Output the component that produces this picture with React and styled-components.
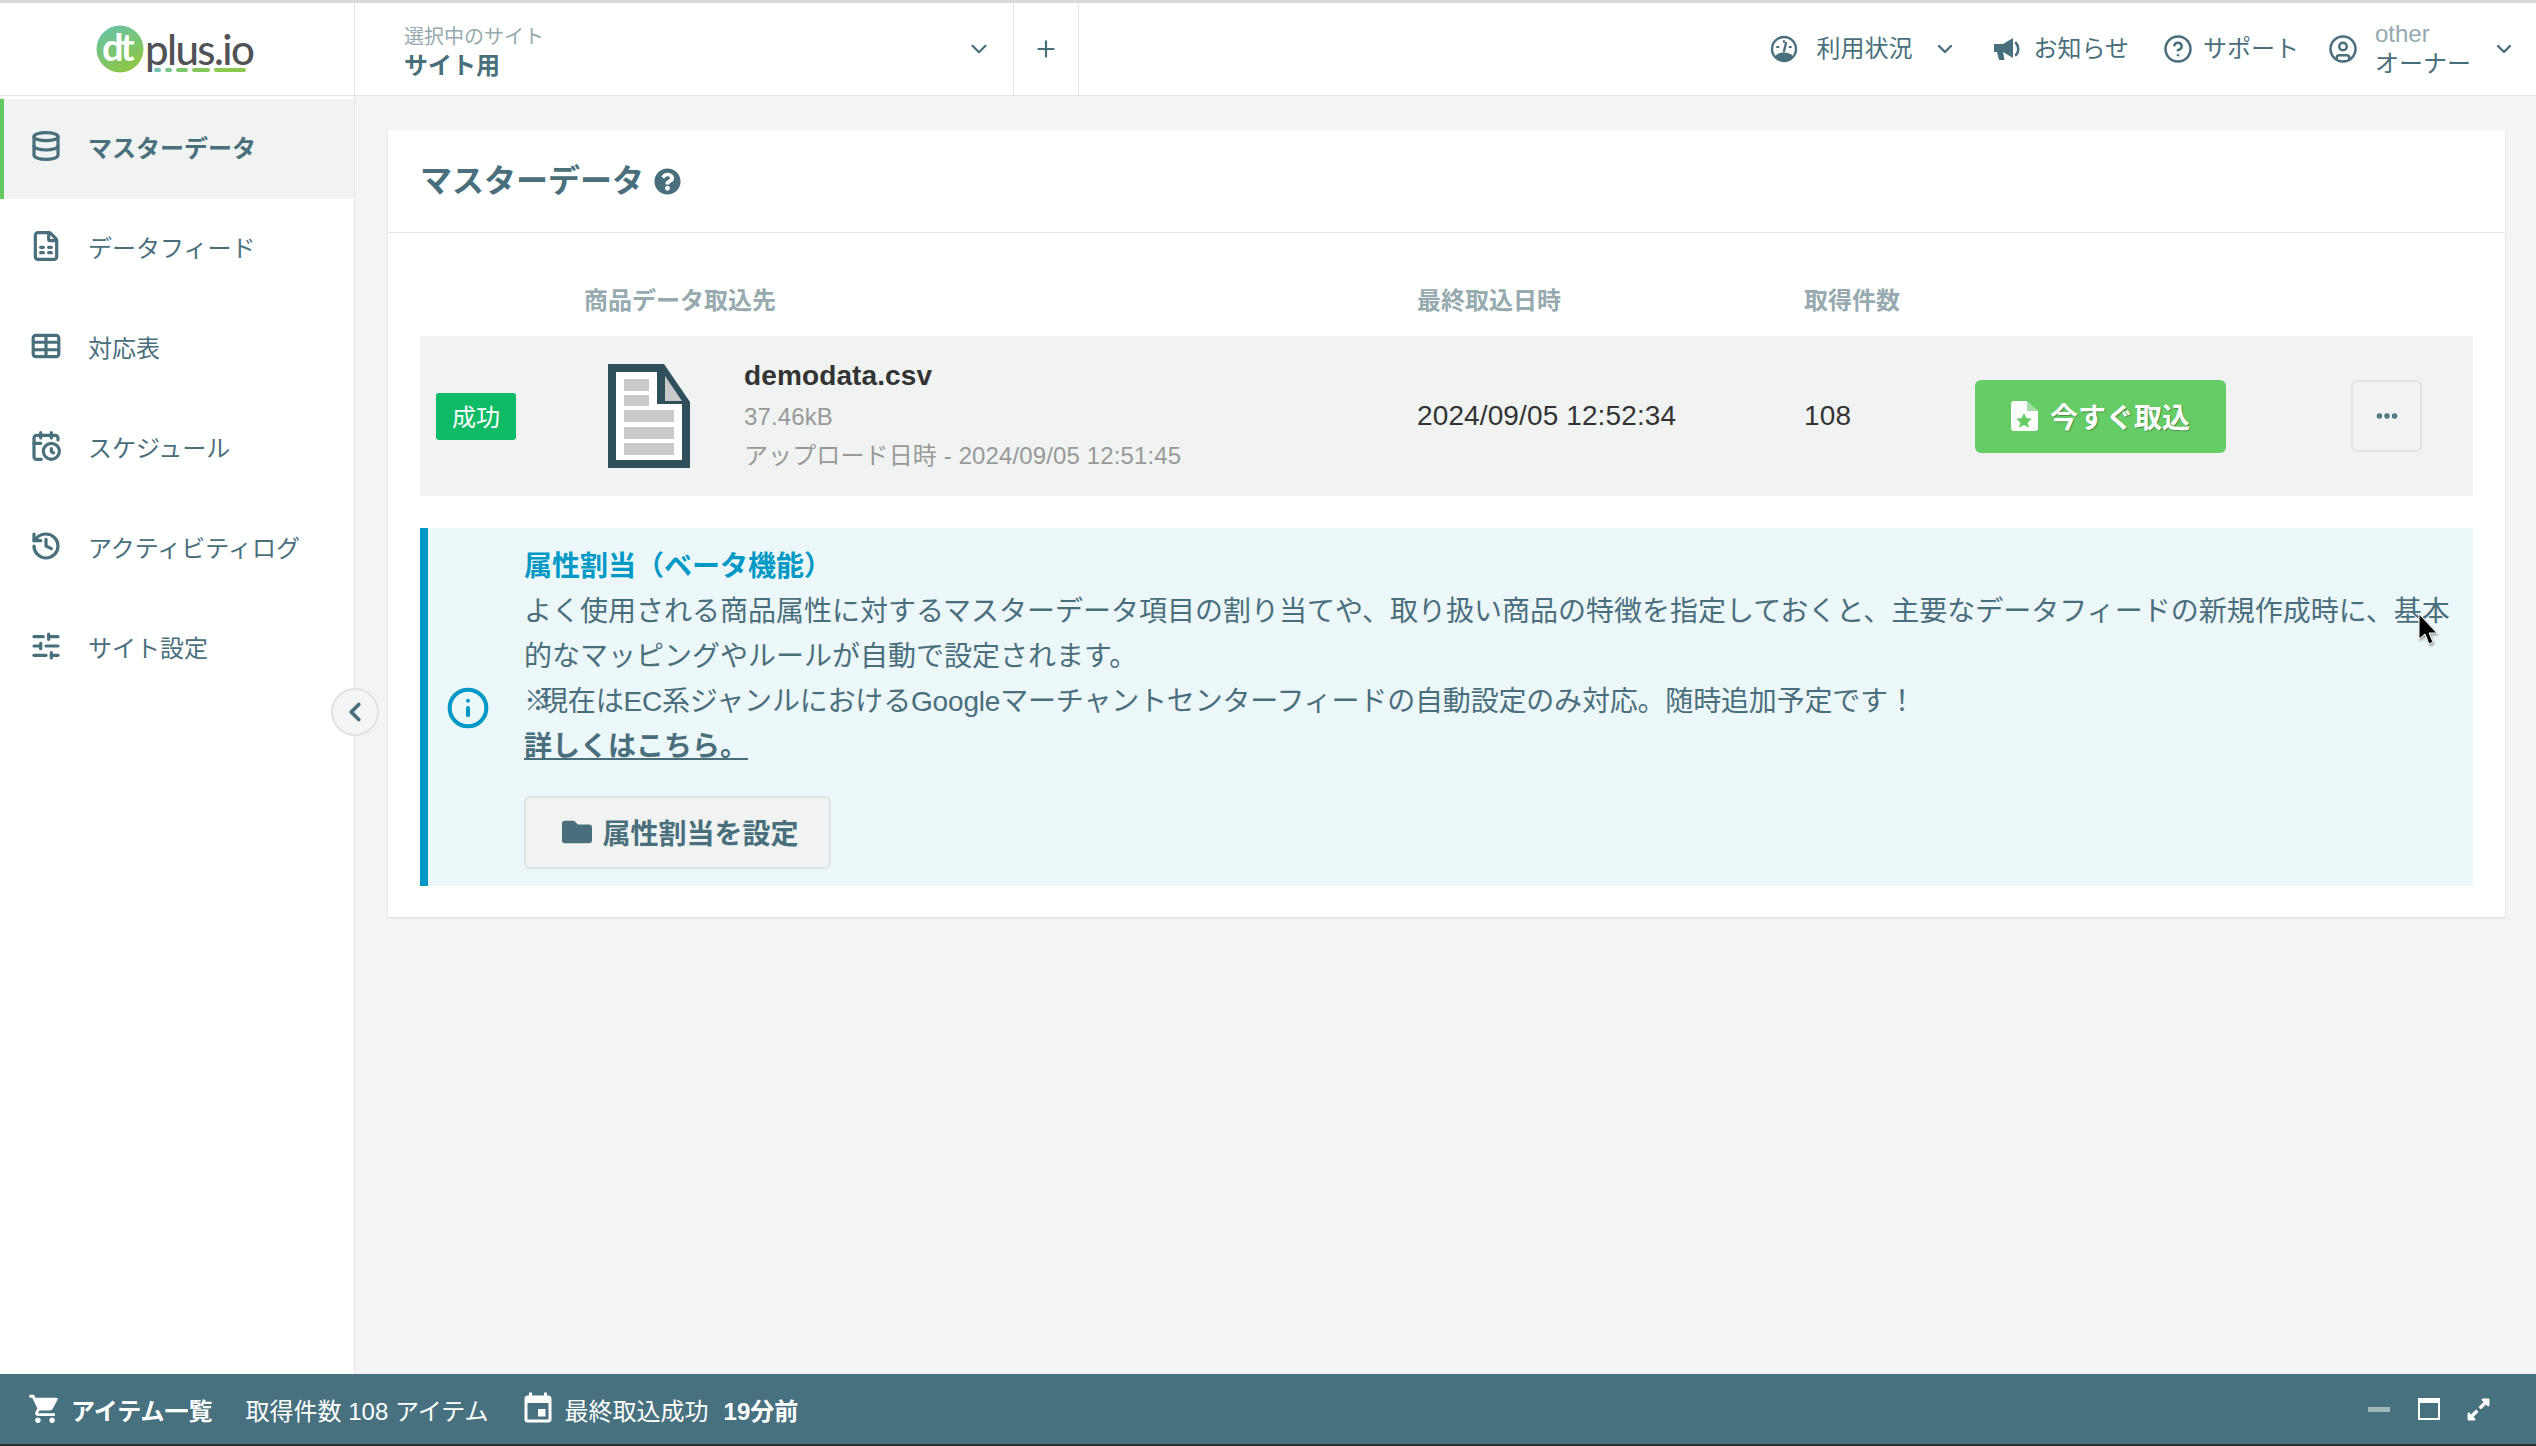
import React from "react";
import styled, { createGlobalStyle } from "styled-components";
import {
  Database,
  FileSpreadsheet,
  CalendarClock,
  History,
  SlidersHorizontal,
  ChevronDown,
  ChevronLeft,
  Plus,
  CircleHelp,
  CircleUser,
  Info,
  Ellipsis,
} from "lucide-react";
import { FaFolder, FaQuestionCircle, FaExpandAlt } from "react-icons/fa";
import { MdShoppingCart, MdEvent } from "react-icons/md";

const teal = "#4a6f7c";
const font = `"Liberation Sans", "Noto Sans CJK JP", sans-serif`;

const GlobalStyle = createGlobalStyle`
  html, body {
    margin: 0;
    padding: 0;
    height: 100%;
    overflow: hidden;
    background: #f3f4f5;
  }
  * {
    box-sizing: border-box;
  }
  body {
    font-family: ${font};
    color: ${teal};
  }
`;

const Page = styled.div`
  position: relative;
  width: 100%;
  height: 100vh;
  display: flex;
  flex-direction: column;
`;

const Header = styled.header`
  flex: 0 0 96px;
  display: flex;
  align-items: stretch;
  background: #fff;
  border-top: 3px solid #d9dadc;
  border-bottom: 1px solid #e3e6e6;
`;

const LogoCell = styled.div`
  width: 355px;
  display: flex;
  align-items: center;
  padding-left: 96px;
  border-right: 1px solid #e3e6e6;
`;

const LogoSvg = styled.svg`
  flex: none;
  overflow: visible;
`;

const LogoWordWrap = styled.div`
  display: flex;
  flex-direction: column;
  margin-left: 1px;
  padding-top: 3px;
`;

const LogoWord = styled.span`
  font-family: Lato, sans-serif;
  font-size: 42px;
  line-height: 38px;
  font-weight: 500;
  letter-spacing: -1.6px;
  color: #505256;
`;

const LogoDots = styled.div`
  display: flex;
  gap: 4px;
  margin-left: 9px;
  margin-top: 0;
`;

const LogoDot = styled.i`
  display: block;
  width: ${(p) => p.$w}px;
  height: 4px;
  border-radius: 2px;
  background: ${(p) => p.$c};
`;

const SiteSelect = styled.div`
  width: 659px;
  display: flex;
  align-items: center;
  justify-content: space-between;
  padding: 0 21px 0 49px;
  border-right: 1px solid #e3e6e6;
`;

const SiteLabels = styled.div`
  display: flex;
  flex-direction: column;
  padding-top: 6px;
`;

const SiteCaption = styled.span`
  font-size: 20px;
  line-height: 28px;
  color: #96aaaf;
`;

const SiteName = styled.span`
  font-size: 24px;
  line-height: 30px;
  font-weight: 700;
  color: ${teal};
`;

const AddCell = styled.div`
  width: 65px;
  display: flex;
  align-items: center;
  justify-content: center;
  color: ${teal};
  border-right: 1px solid #e3e6e6;
`;

const HeaderTools = styled.div`
  flex: 1;
  display: flex;
  align-items: center;
  justify-content: flex-end;
  padding-right: 20px;
`;

const Tool = styled.div`
  display: flex;
  align-items: center;
  gap: ${(p) => p.$gap || 12}px;
  margin-left: ${(p) => p.$ml || 0}px;
  font-size: 24px;
  line-height: 30px;
  color: ${teal};
`;

const ToolChevron = styled.span`
  display: flex;
  margin-left: ${(p) => p.$ml}px;
  color: ${teal};
`;

const UserLabels = styled.div`
  display: flex;
  flex-direction: column;
`;

const UserName = styled.span`
  font-size: 24px;
  line-height: 30px;
  color: #96aaaf;
`;

const Middle = styled.div`
  flex: 1;
  min-height: 0;
  display: flex;
`;

const Sidebar = styled.nav`
  position: relative;
  width: 355px;
  display: flex;
  flex-direction: column;
  padding-top: 3px;
  background: #fff;
  border-right: 1px solid #e3e6e6;
`;

const NavItem = styled.div`
  height: 100px;
  display: flex;
  align-items: center;
  gap: 26px;
  padding: 0 0 6px 26px;
  border-left: 4px solid ${(p) => (p.$active ? "#62c962" : "transparent")};
  background: ${(p) => (p.$active ? "#f1f3f3" : "transparent")};
  font-size: 24px;
  font-weight: ${(p) => (p.$active ? 700 : 400)};
  color: ${teal};
  svg {
    flex: none;
  }
`;

const CollapseButton = styled.button`
  position: absolute;
  top: 592px;
  right: -25px;
  width: 48px;
  height: 48px;
  display: flex;
  align-items: center;
  justify-content: center;
  padding: 0;
  border-radius: 50%;
  border: 2px solid #dfe3e3;
  background: #f4f5f5;
  color: ${teal};
`;

const Main = styled.main`
  flex: 1;
  padding: 34px 31px 0 33px;
`;

const Card = styled.section`
  background: #fff;
  height: 787px;
  box-shadow: 0 1px 2px rgba(0, 0, 0, 0.12);
`;

const CardHeader = styled.div`
  height: 103px;
  display: flex;
  align-items: center;
  gap: 10px;
  padding-left: 32px;
  border-bottom: 1px solid #e3e6e6;
`;

const CardTitle = styled.h1`
  margin: 0;
  font-size: 32px;
  line-height: 40px;
  font-weight: 700;
  color: ${teal};
`;

const CardBody = styled.div`
  padding: 0 32px;
`;

const columns = "164px 833px 387px 171px 376px 1fr";

const TableHead = styled.div`
  height: 103px;
  display: grid;
  grid-template-columns: ${columns};
  align-items: center;
  padding-top: 33px;
  font-size: 24px;
  line-height: 30px;
  font-weight: 700;
  color: #96aaaf;
`;

const TableRow = styled.div`
  height: 160px;
  display: grid;
  grid-template-columns: ${columns};
  align-items: center;
  background: #f1f3f3;
  font-size: 28px;
  letter-spacing: 0.12px;
  color: #333;
`;

const StatusCell = styled.div`
  padding-left: 16px;
`;

const Badge = styled.span`
  display: flex;
  align-items: center;
  justify-content: center;
  width: 80px;
  height: 47px;
  padding-bottom: 1px;
  border-radius: 3px;
  background: #0fbb66;
  color: #fff;
  font-size: 24px;
`;

const SourceCell = styled.div`
  display: flex;
  align-items: center;
  gap: 54px;
  padding-left: 24px;
`;

const FileInfo = styled.div`
  display: flex;
  flex-direction: column;
  padding-bottom: 1px;
`;

const FileName = styled.div`
  font-size: 28px;
  line-height: 38px;
  margin-bottom: 2px;
  font-weight: 700;
  color: #333;
`;

const FileMeta = styled.div`
  font-size: 24px;
  line-height: 39px;
  color: #999;
`;

const ImportButton = styled.button`
  width: 251px;
  height: 73px;
  display: flex;
  align-items: center;
  justify-content: center;
  gap: 12px;
  border: none;
  border-radius: 6px;
  background: #66cc66;
  color: #fff;
  font-family: ${font};
  font-size: 28px;
  font-weight: 700;
  text-shadow: 1px 1px 1px rgba(0, 0, 0, 0.3);
`;

const MoreButton = styled.button`
  width: 71px;
  height: 72px;
  display: flex;
  align-items: center;
  justify-content: center;
  padding: 0;
  border: 2px solid #dfe3e3;
  border-radius: 6px;
  background: transparent;
  color: ${teal};
`;

const Alert = styled.div`
  height: 358px;
  margin-top: 32px;
  display: flex;
  background: #ecf7f9;
  border-left: 8px solid #0099c6;
`;

const AlertIcon = styled.div`
  width: 96px;
  display: flex;
  align-items: center;
  padding-left: 18px;
  padding-top: 2px;
  color: #0099c6;
`;

const AlertBody = styled.div`
  flex: 1;
  padding: 16px 12px 0 0;
  font-size: 28px;
  line-height: 45px;
  color: ${teal};
`;

const AlertTitle = styled.div`
  font-weight: 700;
  color: #0099c6;
`;

const AlertNote = styled.div`
  letter-spacing: -0.18px;
`;

const NoteMark = styled.span`
  letter-spacing: -12px;
`;

const AlertLink = styled.a`
  display: block;
  font-weight: 700;
  color: ${teal};
  text-decoration: underline;
`;

const OutlineButton = styled.button`
  width: 307px;
  height: 73px;
  margin-top: 27px;
  display: flex;
  align-items: center;
  justify-content: center;
  gap: 10px;
  padding: 0 0 2px 6px;
  border: 2px solid #dfe3e3;
  border-radius: 6px;
  background: #f1f3f3;
  color: ${teal};
  font-family: ${font};
  font-size: 28px;
  font-weight: 700;
`;

const Footer = styled.footer`
  flex: 0 0 72px;
  display: flex;
  align-items: center;
  padding: 0 45px 0 28px;
  background: #47717f;
  border-bottom: 2px solid #2a2f31;
  color: #fff;
  font-size: 24px;
`;

const FooterGroup = styled.div`
  display: flex;
  align-items: center;
  gap: ${(p) => p.$gap || 0}px;
  margin-left: ${(p) => p.$ml || 0}px;
  font-weight: ${(p) => (p.$bold ? 700 : 400)};
`;

const FooterControls = styled.div`
  margin-left: auto;
  display: flex;
  align-items: center;
`;

const MinimizeBar = styled.i`
  display: block;
  width: 22px;
  height: 5px;
  margin-right: 28px;
  background: #9fb6bd;
`;

const WindowBox = styled.i`
  display: block;
  width: 22px;
  height: 22px;
  margin-right: 26px;
  border: 2px solid #fff;
  border-top-width: 5px;
`;

const Pointer = styled.svg`
  position: absolute;
  left: 2418px;
  top: 613px;
  filter: drop-shadow(1px 2px 1px rgba(0, 0, 0, 0.35));
`;

const LogoMark = () => (
  <LogoSvg width="48" height="48" viewBox="0 0 48 48">
    <defs>
      <linearGradient id="logoFill" x1="0.2" y1="0" x2="0.7" y2="1">
        <stop offset="0" stopColor="#69c3a9" />
        <stop offset="1" stopColor="#8cc63f" />
      </linearGradient>
    </defs>
    <circle cx="24" cy="24" r="23.5" fill="url(#logoFill)" />
    <text x="6" y="36" fontFamily="Lato, sans-serif" fontSize="38" fontWeight="700" letterSpacing="-3" fill="#fff">
      dt
    </text>
  </LogoSvg>
);

const TableIcon = () => (
  <svg width="32" height="32" viewBox="0 0 30 30" fill="none" stroke={teal} strokeWidth="3">
    <rect x="3" y="5" width="24" height="20" rx="2.5" />
    <path d="M3 11.5h24M3 18.5h24M15 6v18" />
  </svg>
);

const GaugeIcon = () => (
  <svg width="28" height="28" viewBox="0 0 28 28" fill="none">
    <circle cx="14" cy="14" r="12" stroke={teal} strokeWidth="2.4" />
    <path d="M5 21.5a12 12 0 0 0 18 0c-2-3-5-4-9-4s-7 1-9 4z" fill={teal} />
    <path d="M14 16l2-8" stroke={teal} strokeWidth="2.4" strokeLinecap="round" />
    <path d="M7 12h1.5M19.500 12H21M14 6v1" stroke={teal} strokeWidth="2" strokeLinecap="round" />
  </svg>
);

const HornIcon = () => (
  <svg width="27" height="24" viewBox="0 0 27 24" fill={teal}>
    <path d="M0 7h9l10-6v20L9 15H0z" />
    <path d="M3 15h6l1.500 8H5z" />
    <path d="M22 6c3 3 3 9 0 12" fill="none" stroke={teal} strokeWidth="2.600" strokeLinecap="round" />
  </svg>
);

const DocumentIcon = () => (
  <svg width="82" height="104" viewBox="0 0 82 104">
    <path d="M0 0h56l26 38v66H0z" fill="#2f4f5c" />
    <path d="M8 8h41v32h25v56H8z" fill="#fff" />
    <path d="M57 12l17 25H57z" fill="#c9c9c9" />
    <path d="M16 15h25v12H16zM16 31h25v11H16zM16 46h50v12H16zM16 63h50v12H16zM16 79h50v12H16z" fill="#c9c9c9" />
  </svg>
);

const FileStarIcon = () => (
  <svg width="27" height="30" viewBox="0 0 27 30">
    <path d="M3 0h13l11 10v17a3 3 0 0 1-3 3H3a3 3 0 0 1-3-3V3a3 3 0 0 1 3-3z" fill="#fff" />
    <path d="M16 0v10h11z" fill="#66cc66" opacity="0.6" />
    <path d="M13 12l2.400 5 5.400.7-4 3.700 1.100 5.400-4.900-2.700-4.900 2.700 1.100-5.400-4-3.700 5.400-.7z" fill="#66cc66" />
  </svg>
);

const navItems = [
  { label: "マスターデータ", icon: <Database size={32} strokeWidth={2.4} />, active: true },
  { label: "データフィード", icon: <FileSpreadsheet size={32} strokeWidth={2.4} /> },
  { label: "対応表", icon: <TableIcon /> },
  { label: "スケジュール", icon: <CalendarClock size={32} strokeWidth={2.4} /> },
  { label: "アクティビティログ", icon: <History size={32} strokeWidth={2.4} /> },
  { label: "サイト設定", icon: <SlidersHorizontal size={32} strokeWidth={2.4} /> },
];

const logoDots = [
  [7, "#6fc3b0"],
  [7, "#77c58f"],
  [12, "#7fc76f"],
  [18, "#85c85c"],
  [32, "#8cc94f"],
];

export default function App() {
  return (
    <Page>
      <GlobalStyle />
      <Header>
        <LogoCell>
          <LogoMark />
          <LogoWordWrap>
            <LogoWord>plus.io</LogoWord>
            <LogoDots>
              {logoDots.map(([w, c]) => (
                <LogoDot key={c} $w={w} $c={c} />
              ))}
            </LogoDots>
          </LogoWordWrap>
        </LogoCell>
        <SiteSelect>
          <SiteLabels>
            <SiteCaption>選択中のサイト</SiteCaption>
            <SiteName>サイト用</SiteName>
          </SiteLabels>
          <ChevronDown size={26} strokeWidth={2} />
        </SiteSelect>
        <AddCell>
          <Plus size={26} strokeWidth={2} />
        </AddCell>
        <HeaderTools>
          <Tool $gap={18}>
            <GaugeIcon />
            利用状況
          </Tool>
          <ToolChevron $ml={21}>
            <ChevronDown size={24} strokeWidth={2.4} />
          </ToolChevron>
          <Tool $ml={37} $gap={12}>
            <HornIcon />
            お知らせ
          </Tool>
          <Tool $ml={34} $gap={10}>
            <CircleHelp size={30} strokeWidth={2} />
            サポート
          </Tool>
          <Tool $ml={29} $gap={17}>
            <CircleUser size={30} strokeWidth={2} />
            <UserLabels>
              <UserName>other</UserName>
              オーナー
            </UserLabels>
          </Tool>
          <ToolChevron $ml={21}>
            <ChevronDown size={24} strokeWidth={2.4} />
          </ToolChevron>
        </HeaderTools>
      </Header>
      <Middle>
        <Sidebar>
          {navItems.map((item) => (
            <NavItem key={item.label} $active={item.active}>
              {item.icon}
              {item.label}
            </NavItem>
          ))}
          <CollapseButton>
            <ChevronLeft size={30} strokeWidth={3} />
          </CollapseButton>
        </Sidebar>
        <Main>
          <Card>
            <CardHeader>
              <CardTitle>マスターデータ</CardTitle>
              <FaQuestionCircle size={27} color={teal} />
            </CardHeader>
            <CardBody>
              <TableHead>
                <span />
                <span>商品データ取込先</span>
                <span>最終取込日時</span>
                <span>取得件数</span>
              </TableHead>
              <TableRow>
                <StatusCell>
                  <Badge>成功</Badge>
                </StatusCell>
                <SourceCell>
                  <DocumentIcon />
                  <FileInfo>
                    <FileName>demodata.csv</FileName>
                    <FileMeta>37.46kB</FileMeta>
                    <FileMeta>アップロード日時 - 2024/09/05 12:51:45</FileMeta>
                  </FileInfo>
                </SourceCell>
                <div>2024/09/05 12:52:34</div>
                <div>108</div>
                <ImportButton>
                  <FileStarIcon />
                  今すぐ取込
                </ImportButton>
                <MoreButton>
                  <Ellipsis size={26} strokeWidth={3} />
                </MoreButton>
              </TableRow>
              <Alert>
                <AlertIcon>
                  <Info size={44} strokeWidth={2.2} />
                </AlertIcon>
                <AlertBody>
                  <AlertTitle>属性割当（ベータ機能）</AlertTitle>
                  よく使用される商品属性に対するマスターデータ項目の割り当てや、取り扱い商品の特徴を指定しておくと、主要なデータフィードの新規作成時に、基本的なマッピングやルールが自動で設定されます。
                  <AlertNote>
                    <NoteMark>※</NoteMark>
                    現在はEC系ジャンルにおけるGoogleマーチャントセンターフィードの自動設定のみ対応。随時追加予定です！
                  </AlertNote>
                  <AlertLink>詳しくはこちら。</AlertLink>
                  <OutlineButton>
                    <FaFolder size={30} />
                    属性割当を設定
                  </OutlineButton>
                </AlertBody>
              </Alert>
            </CardBody>
          </Card>
        </Main>
      </Middle>
      <Footer>
        <FooterGroup $gap={9} $bold>
          <MdShoppingCart size={34} />
          アイテム一覧
        </FooterGroup>
        <FooterGroup $ml={33}>取得件数 108 アイテム</FooterGroup>
        <FooterGroup $ml={31} $gap={9}>
          <MdEvent size={36} />
          最終取込成功
        </FooterGroup>
        <FooterGroup $ml={15} $bold>
          19分前
        </FooterGroup>
        <FooterControls>
          <MinimizeBar />
          <WindowBox />
          <FaExpandAlt size={25} />
        </FooterControls>
      </Footer>
      <Pointer width="20" height="34" viewBox="0 0 20 34">
        <path d="M1 1v25l6-5 4 10 4-2-4-9h8z" fill="#000" stroke="#fff" strokeWidth="1" />
      </Pointer>
    </Page>
  );
}
